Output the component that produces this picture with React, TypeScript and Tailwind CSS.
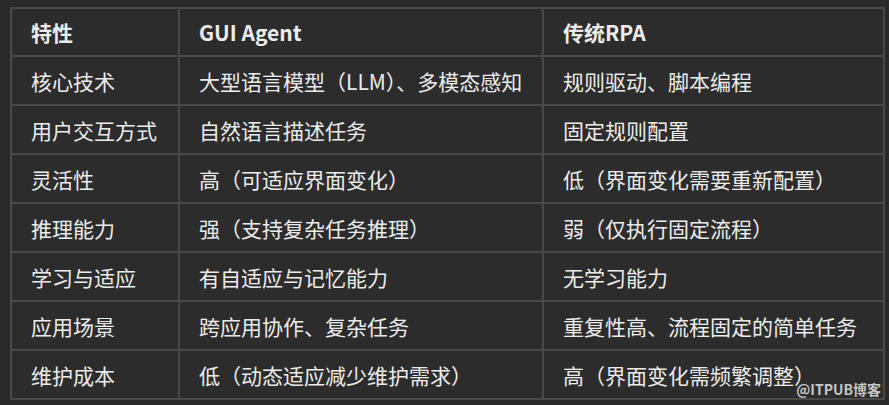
import React from "react";

const rows: [string, string, string][] = [
  ["核心技术", "大型语言模型（LLM）、多模态感知", "规则驱动、脚本编程"],
  ["用户交互方式", "自然语言描述任务", "固定规则配置"],
  ["灵活性", "高（可适应界面变化）", "低（界面变化需要重新配置）"],
  ["推理能力", "强（支持复杂任务推理）", "弱（仅执行固定流程）"],
  ["学习与适应", "有自适应与记忆能力", "无学习能力"],
  ["应用场景", "跨应用协作、复杂任务", "重复性高、流程固定的简单任务"],
  ["维护成本", "低（动态适应减少维护需求）", "高（界面变化需频繁调整）"],
];

const font = { fontFamily: '"Noto Sans CJK SC", "Noto Sans", sans-serif' };

export default function App() {
  return (
    <div
      className="relative w-[889px] h-[405px] bg-[#292929] pt-[7px] pl-[10px] text-[#ececec]"
      style={font}
    >
      <table className="border-collapse bg-[#2c2c2c] text-[21px] leading-[24px]">
        <colgroup>
          <col className="w-[168px]" />
          <col className="w-[364px]" />
          <col className="w-[341px]" />
        </colgroup>
        <thead>
          <tr>
            <th className="h-[48px] border-2 border-[#494949] pl-[19px] text-left font-bold">特性</th>
            <th className="h-[48px] border-2 border-[#494949] pl-[19px] text-left font-bold">GUI Agent</th>
            <th className="h-[48px] border-2 border-[#494949] pl-[19px] text-left font-bold">传统RPA</th>
          </tr>
        </thead>
        <tbody>
          {rows.map((r, i) => (
            <tr key={i}>
              {r.map((c, j) => (
                <td key={j} className="h-[49px] border-2 border-[#494949] pl-[19px] whitespace-nowrap">
                  {c}
                </td>
              ))}
            </tr>
          ))}
        </tbody>
      </table>
      <div className="absolute right-[8px] bottom-[7px] text-[14px] leading-[18px] font-bold text-[#d8d8d8] opacity-90">
        @ITPUB博客
      </div>
    </div>
  );
}
